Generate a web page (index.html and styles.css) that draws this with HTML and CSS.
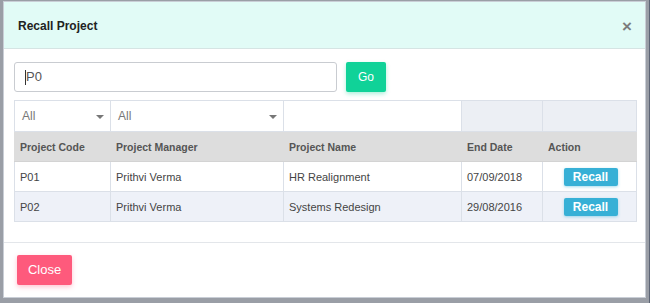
FILE: index.html
```html
<!DOCTYPE html>
<html>
<head>
<meta charset="utf-8">
<title>Recall Project</title>
<link rel="stylesheet" href="styles.css">
</head>
<body>
	<div class="modal">
		<div class="modal-head">
			<h4>Recall Project</h4>
			<span class="close-x">&times;</span>
		</div>
		<div class="modal-body">
			<div class="search">
				<div class="search-input"><span class="caret-line"></span>P0</div>
				<a class="btn-go">Go</a>
			</div>
			<table class="grid">
				<tr class="filters">
					<td class="c1"><div class="sel">All<span class="arrow"></span></div></td>
					<td class="c2"><div class="sel">All<span class="arrow"></span></div></td>
					<td class="c3"><div class="txt"></div></td>
					<td class="c4 blank"></td>
					<td class="c5 blank"></td>
				</tr>
				<tr class="head">
					<th>Project Code</th>
					<th>Project Manager</th>
					<th>Project Name</th>
					<th>End Date</th>
					<th>Action</th>
				</tr>
				<tr>
					<td>P01</td>
					<td>Prithvi Verma</td>
					<td>HR Realignment</td>
					<td>07/09/2018</td>
					<td class="act"><a class="btn-recall">Recall</a></td>
				</tr>
				<tr class="alt">
					<td>P02</td>
					<td>Prithvi Verma</td>
					<td>Systems Redesign</td>
					<td>29/08/2016</td>
					<td class="act"><a class="btn-recall">Recall</a></td>
				</tr>
			</table>
		</div>
		<div class="modal-foot">
			<a class="btn-close">Close</a>
		</div>
	</div>
</body>
</html>
```

FILE: styles.css
```css
*{
	margin:0;
	padding:0;
	box-sizing:border-box;
}
html,body{
	height:100%;
}
body{
	background:#5d6576;
	font-family:"Liberation Sans",Arial,sans-serif;
	padding:1px 0 0 3px;
	overflow:hidden;
}
.modal{
	width:643px;
	height:297px;
	background:#fff;
	border:1px solid #c9ced6;
	box-shadow:0 2px 0 3px #9a9ea6;
}
.modal-head{
	height:47px;
	background:#e1fbf6;
	border-bottom:1px solid #d5e4e3;
	display:flex;
	align-items:center;
	justify-content:space-between;
	padding:2px 13px 0 14px;
}
.modal-head h4{
	font-size:12px;
	font-weight:bold;
	color:#222;
}
.close-x{
	font-size:17px;
	font-weight:bold;
	color:#7c7c7c;
	line-height:1;
}
.modal-body{
	padding:13px 9px 20px 10px;
	border-bottom:1px solid #e3e6ea;
}
.search{
	display:flex;
	gap:9px;
	margin-bottom:8px;
}
.search-input{
	width:323px;
	height:30px;
	border:1px solid #c9ccd1;
	border-radius:3px;
	font-size:13px;
	color:#555;
	line-height:28px;
	padding-left:10px;
	display:flex;
	align-items:center;
}
.caret-line{
	display:inline-block;
	width:1px;
	height:15px;
	background:#333;
}
.btn-go{
	width:40px;
	height:30px;
	background:#10d298;
	border-radius:2px;
	color:#fff;
	font-size:12px;
	line-height:30px;
	text-align:center;
	box-shadow:0 2px 4px rgba(16,210,152,.35);
}
.grid{
	width:622px;
	border-collapse:collapse;
	border:1px solid #dbe0e8;
	font-size:11px;
	color:#444;
	table-layout:fixed;
}
.grid td,.grid th{
	border:1px solid #dbe0e8;
	height:30px;
	padding:0 5px;
	text-align:left;
}
.grid .c1{width:96px;}
.grid .c2{width:173px;}
.grid .c3{width:178px;}
.grid .c4{width:81px;}
.grid .c5{width:94px;}
.filters td{
	height:31px;
	padding:0;
	background:#fff;
}
.filters td.blank{
	background:#eceff4;
}
.sel{
	height:30px;
	line-height:30px;
	padding-left:7px;
	font-size:12px;
	color:#777;
	position:relative;
}
.arrow{
	position:absolute;
	right:6px;
	top:14px;
	border-left:4px solid transparent;
	border-right:4px solid transparent;
	border-top:4px solid #777;
}
.head th{
	background:#dddddd;
	font-weight:bold;
	font-size:10.5px;
	color:#555;
	border-color:#dddddd;
	border-bottom-color:#d3d3d3;
}
.alt td{
	background:#eef1f8;
}
.act{
	text-align:center !important;
}
.btn-recall{
	display:inline-block;
	width:54px;
	height:18px;
	line-height:18px;
	background:#37b0d6;
	color:#fff;
	font-weight:bold;
	font-size:12px;
	text-align:center;
	border-radius:2px;
	box-shadow:0 1px 3px rgba(55,176,214,.45);
	margin-left:2px;
}
.modal-foot{
	padding:12px 13px;
}
.btn-close{
	display:inline-block;
	width:55px;
	height:30px;
	line-height:30px;
	text-align:center;
	background:#fe5a7c;
	color:#fff;
	font-size:13px;
	border-radius:2px;
	box-shadow:0 2px 5px rgba(254,90,124,.35);
}
```
